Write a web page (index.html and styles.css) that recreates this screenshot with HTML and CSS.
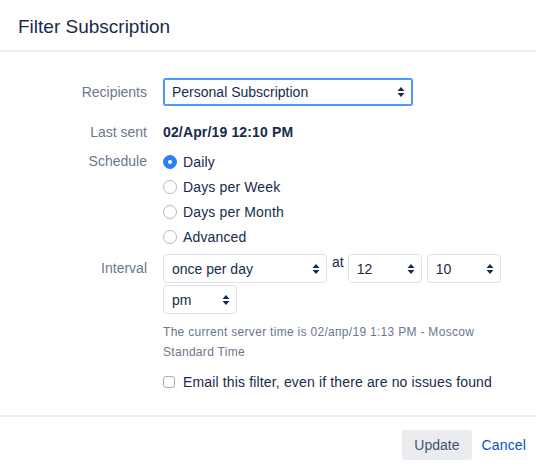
FILE: index.html
```html
<!DOCTYPE html>
<html lang="en">
<head>
  <meta charset="UTF-8" />
  <title>Filter Subscription</title>
  <link rel="stylesheet" href="styles.css">
</head>
<body>
  <div class="dialog">
    <header class="dialog-header">
      <h2>Filter Subscription</h2>
    </header>
    <form class="dialog-body" onsubmit="return false;">
      <div class="row row-recipients">
        <label class="field-label" for="recipients">Recipients</label>
        <div class="select select-focus select-wide">
          <select id="recipients">
            <option>Personal Subscription</option>
            <option>Group Subscription</option>
          </select>
          <svg class="arrows" width="8" height="12" viewBox="0 0 8 12"><path d="M4 1 L7.5 5 H0.5 Z M4 11 L0.5 7 H7.5 Z" fill="#172b4d"/></svg>
        </div>
      </div>
      <div class="row row-last">
        <span class="field-label">Last sent</span>
        <strong class="value">02/Apr/19 12:10 PM</strong>
      </div>
      <div class="row row-schedule">
        <span class="field-label">Schedule</span>
        <div class="radios">
          <label class="radio"><input type="radio" name="schedule" checked><span class="mark"></span>Daily</label>
          <label class="radio"><input type="radio" name="schedule"><span class="mark"></span>Days per Week</label>
          <label class="radio"><input type="radio" name="schedule"><span class="mark"></span>Days per Month</label>
          <label class="radio"><input type="radio" name="schedule"><span class="mark"></span>Advanced</label>
        </div>
      </div>
      <div class="row row-interval">
        <label class="field-label" for="interval">Interval</label>
        <div class="interval">
          <div class="interval-line">
            <div class="select select-interval">
              <select id="interval">
                <option>once per day</option>
                <option>twice per day</option>
              </select>
              <svg class="arrows" width="8" height="12" viewBox="0 0 8 12"><path d="M4 1 L7.5 5 H0.5 Z M4 11 L0.5 7 H7.5 Z" fill="#172b4d"/></svg>
            </div>
            <span class="at">at</span>
            <div class="select select-small">
              <select><option>12</option></select>
              <svg class="arrows" width="8" height="12" viewBox="0 0 8 12"><path d="M4 1 L7.5 5 H0.5 Z M4 11 L0.5 7 H7.5 Z" fill="#172b4d"/></svg>
            </div>
            <div class="select select-small">
              <select><option>10</option></select>
              <svg class="arrows" width="8" height="12" viewBox="0 0 8 12"><path d="M4 1 L7.5 5 H0.5 Z M4 11 L0.5 7 H7.5 Z" fill="#172b4d"/></svg>
            </div>
          </div>
          <div class="select select-small">
            <select><option>pm</option><option>am</option></select>
            <svg class="arrows" width="8" height="12" viewBox="0 0 8 12"><path d="M4 1 L7.5 5 H0.5 Z M4 11 L0.5 7 H7.5 Z" fill="#172b4d"/></svg>
          </div>
          <p class="hint">The current server time is 02/апр/19 1:13 PM - Moscow Standard Time</p>
        </div>
      </div>
      <div class="row row-check">
        <span></span>
        <label class="check"><input type="checkbox"><span class="box"></span>Email this filter, even if there are no issues found</label>
      </div>
    </form>
    <footer class="dialog-footer">
      <button type="button" class="btn">Update</button>
      <a href="#" class="cancel">Cancel</a>
    </footer>
  </div>
</body>
</html>
```

FILE: styles.css
```css
body { margin: 0; background: #fff; font-family: "Liberation Sans", Arial, sans-serif; font-size: 14px; letter-spacing: 0.15px; color: #172b4d; }
.dialog { width: 536px; height: 467px; display: flex; flex-direction: column; }
.dialog-header { height: 52px; box-sizing: border-box; border-bottom: 2px solid #ebecf0; display: flex; align-items: center; padding: 3px 18px 0; }
.dialog-header h2 { margin: 0; font-size: 19px; font-weight: normal; letter-spacing: 0; color: #172b4d; }

.dialog-body { padding-top: 26px; height: 365px; box-sizing: border-box; border-bottom: 2px solid #ebecf0; }
.row { display: grid; grid-template-columns: 147px 1fr; column-gap: 16px; align-items: start; }
.field-label { text-align: right; color: #6b778c; line-height: 20px; letter-spacing: 0; }

.row-recipients { align-items: center; }
.row-last { margin-top: 16px; line-height: 20px; }
.row-last .value { font-weight: bold; }
.row-schedule { margin-top: 7px; }
.row-schedule .field-label { line-height: 25px; }
.row-interval { margin-top: 5px; }
.row-interval .field-label { line-height: 29px; }
.row-check { margin-top: 7px; }

.select { position: relative; box-sizing: border-box; height: 29px; border: 1px solid #dfe1e6; border-radius: 4px; background: #fff; }
.select select { appearance: none; -webkit-appearance: none; border: 0; background: transparent; font: inherit; color: #172b4d; width: 100%; height: 100%; padding: 0 22px 0 8px; outline: none; }
.select .arrows { position: absolute; right: 6px; top: 50%; margin-top: -6px; pointer-events: none; }
.select-focus { height: 28px; border: 2px solid #4c9aff; border-radius: 3px; }
.select-focus select { padding-left: 7px; }
.select-wide { width: 250px; }
.select-interval { width: 164px; }
.select-small { width: 74px; }

.radios { display: flex; flex-direction: column; }
.radio, .check { display: flex; align-items: center; height: 25px; cursor: pointer; }
.radio input, .check input { display: none; }
.radio .mark { width: 14px; height: 14px; box-sizing: border-box; border: 1px solid #b3b9c4; border-radius: 50%; margin-right: 6px; background: #fff; display: flex; align-items: center; justify-content: center; }
.radio input:checked + .mark { background: #2d7ff9; border-color: #2d7ff9; }
.radio input:checked + .mark::after { content: ""; width: 4px; height: 4px; border-radius: 50%; background: #fff; }
.check .box { width: 12px; height: 12px; box-sizing: border-box; border: 1px solid #a5adba; border-radius: 3px; margin-right: 8px; background: #fff; }

.interval { display: flex; flex-direction: column; gap: 2px; }
.interval-line { display: flex; align-items: flex-start; gap: 5px; }
.at { line-height: 16px; color: #172b4d; margin-right: -1px; letter-spacing: 0; }
.hint { margin: 6px 0 0; font-size: 12px; line-height: 20px; letter-spacing: 0.3px; color: #6b778c; width: 340px; }

.dialog-footer { flex: 1; display: flex; justify-content: flex-end; align-items: flex-start; padding: 13px 10px 0 0; gap: 10px; }
.btn { background: #ebecf0; border: 0; border-radius: 3px; height: 30px; padding: 0 12px; font: inherit; color: #42526e; cursor: pointer; }
.cancel { color: #0052cc; text-decoration: none; line-height: 30px; }
```
